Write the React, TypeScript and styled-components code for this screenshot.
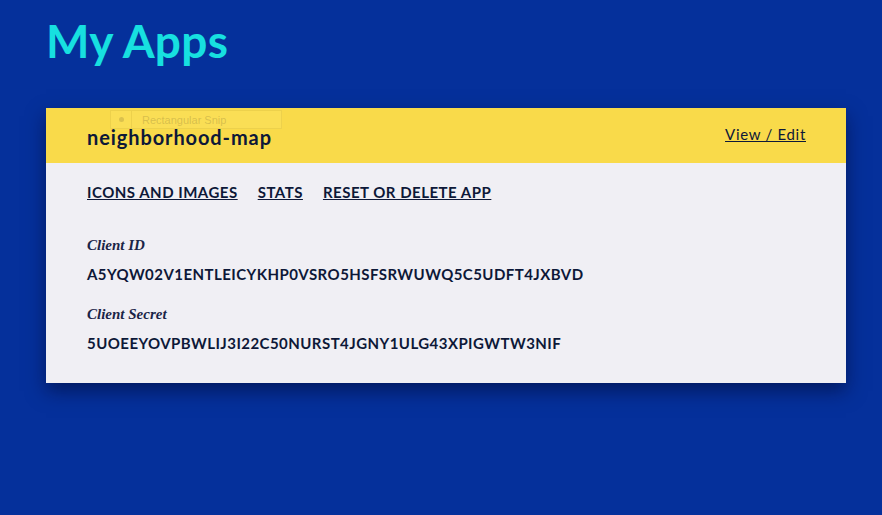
import React from "react";
import styled, { createGlobalStyle } from "styled-components";

const Global = createGlobalStyle`
  html, body { margin: 0; padding: 0; background: #05309b; }
  body { font-family: "Lato", "Noto Sans", sans-serif; }
`;

const Page = styled.div`
  width: 882px;
  height: 515px;
  background: #05309b;
  padding: 0 36px 0 46px;
  box-sizing: border-box;
  overflow: hidden;
`;

const Title = styled.h1`
  margin: 0;
  padding-top: 14px;
  height: 108px;
  box-sizing: border-box;
  font-family: "Lato", sans-serif;
  font-weight: 700;
  font-size: 46px;
  line-height: 54px;
  color: #17e0e0;
  letter-spacing: 0.3px;
`;

const Card = styled.section`
  width: 800px;
  position: relative;
  box-shadow: 0 8px 18px rgba(0, 10, 50, 0.55);
`;

const Header = styled.header`
  height: 55px;
  background: #f9da4a;
  display: flex;
  align-items: center;
  justify-content: space-between;
  padding: 0 40px 0 41px;
  color: #0d1838;
`;

const AppName = styled.h2`
  margin: 2px 0 0;
  font-family: "Lato", sans-serif;
  font-size: 20px;
  font-weight: 700;
  letter-spacing: 0.9px;
`;

const EditLink = styled.a`
  margin-top: -4px;
  font-size: 15px;
  color: #0d1838;
  text-decoration: underline;
  letter-spacing: 0.7px;
`;

const Body = styled.div`
  background: #f0eff4;
  padding: 20px 41px 31px;
  color: #0d1838;
`;

const Tabs = styled.nav`
  display: flex;
  gap: 20px;
  margin-bottom: 36px;
`;

const Tab = styled.a`
  font-size: 15px;
  font-weight: 700;
  text-transform: uppercase;
  text-decoration: underline;
  color: #0d1838;
  letter-spacing: 0.5px;
`;

const Label = styled.div`
  font-family: "Liberation Serif", "DejaVu Serif", serif;
  font-style: italic;
  font-weight: 700;
  font-size: 15px;
  color: #1a2447;
  margin-bottom: 11px;
`;

const Value = styled.div`
  font-size: 15px;
  font-weight: 700;
  letter-spacing: 0.45px;
  margin-bottom: 23px;
  &:last-child { margin-bottom: 0; }
`;

const Snip = styled.div`
  position: absolute;
  left: 64px;
  top: 2px;
  width: 172px;
  height: 19px;
  border: 1px solid rgba(200, 170, 50, 0.25);
  background: rgba(255, 235, 120, 0.25);
  display: flex;
  align-items: center;
  font-family: "Liberation Sans", sans-serif;
  font-size: 11px;
  color: rgba(150, 130, 60, 0.35);
  box-sizing: border-box;
`;

const SnipIcon = styled.span`
  width: 20px;
  height: 100%;
  border-right: 1px solid rgba(200, 170, 50, 0.25);
  display: flex;
  align-items: center;
  justify-content: center;
  margin-right: 10px;
  &::after {
    content: "";
    width: 5px;
    height: 5px;
    border-radius: 50%;
    background: rgba(150, 130, 60, 0.3);
  }
`;

export default function App() {
  return (
    <>
      <Global />
      <Page>
        <Title>My Apps</Title>
        <Card>
          <Snip>
            <SnipIcon />
            Rectangular Snip
          </Snip>
          <Header>
            <AppName>neighborhood-map</AppName>
            <EditLink>View / Edit</EditLink>
          </Header>
          <Body>
            <Tabs>
              <Tab>Icons and Images</Tab>
              <Tab>Stats</Tab>
              <Tab>Reset or Delete App</Tab>
            </Tabs>
            <Label>Client ID</Label>
            <Value>A5YQW02V1ENTLEICYKHP0VSRO5HSFSRWUWQ5C5UDFT4JXBVD</Value>
            <Label>Client Secret</Label>
            <Value>5UOEEYOVPBWLIJ3I22C50NURST4JGNY1ULG43XPIGWTW3NIF</Value>
          </Body>
        </Card>
      </Page>
    </>
  );
}
